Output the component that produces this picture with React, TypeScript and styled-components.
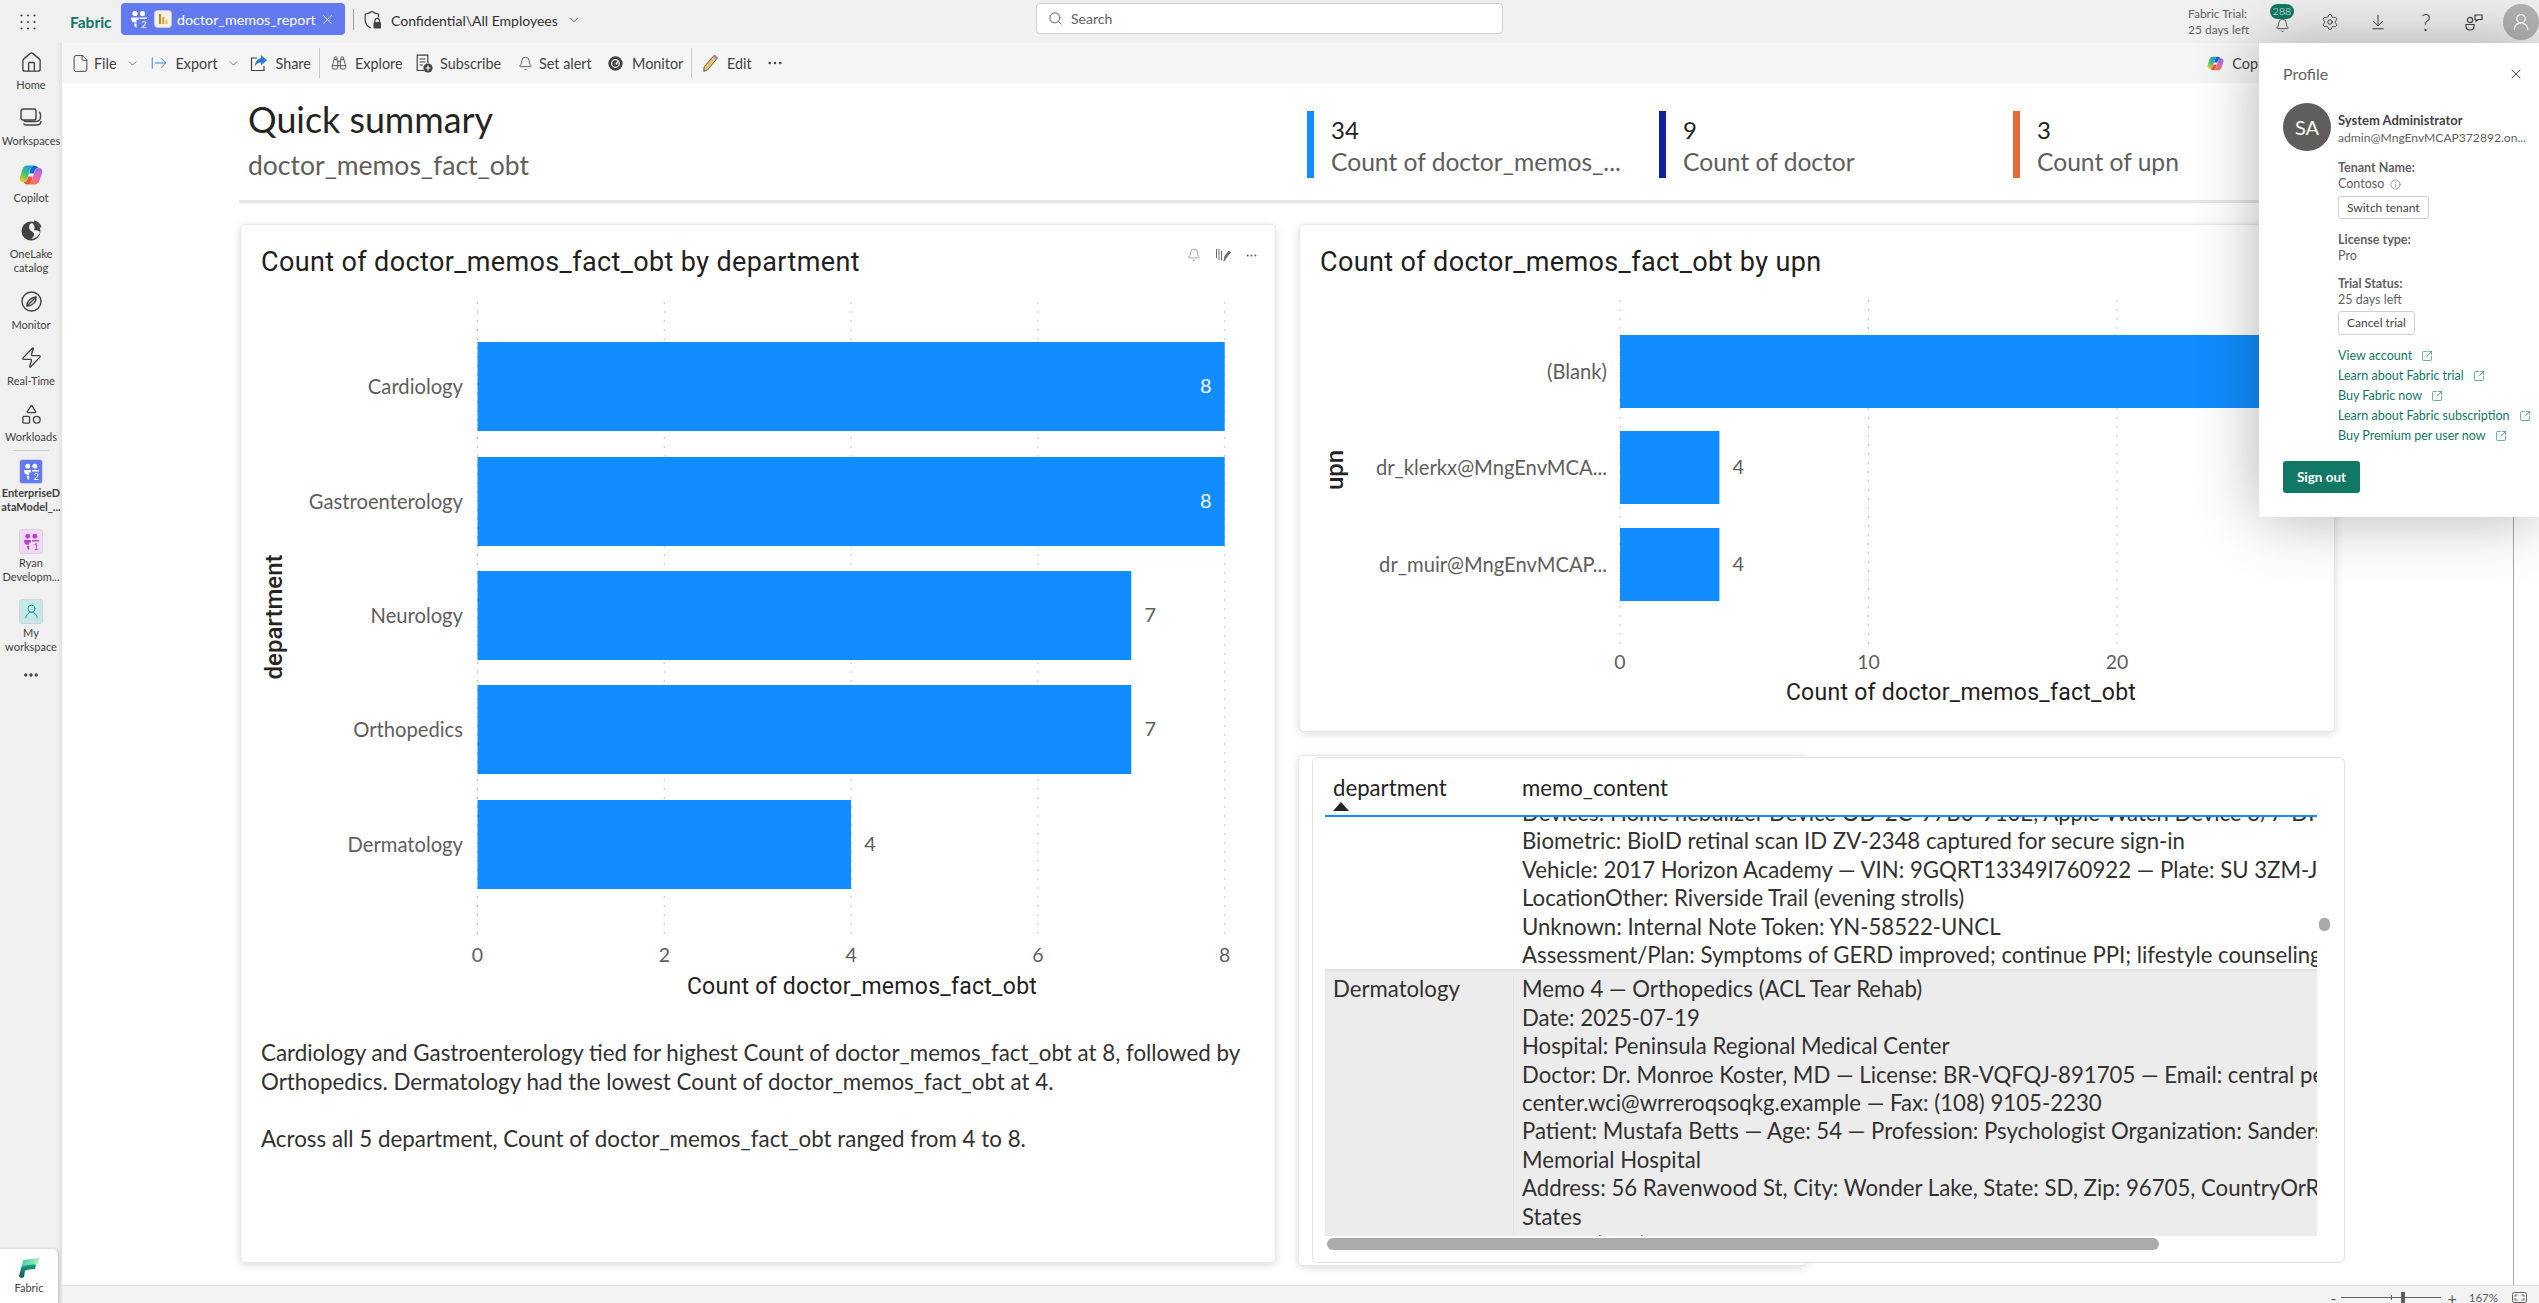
import React from 'react'
import styled, { createGlobalStyle } from 'styled-components'
import {
  ArrowDownToLine,
  ArrowRightFromLine,
  Bell,
  Binoculars,
  ChevronDown,
  Ellipsis,
  File,
  House,
  Info,
  Search,
  Settings,
  Shapes,
  SquareArrowOutUpRight,
  UserRound,
  X,
  Zap,
} from 'lucide-react'

const UI_FONT = '"Lato", "Open Sans", sans-serif'
const DIN_FONT = 'Roboto, "Liberation Sans", sans-serif'
const GREEN = '#117865'
const BLUE = '#118dff'

const GlobalStyle = createGlobalStyle`
  html, body { margin: 0; padding: 0; background: #fff; }
  body { font-family: ${UI_FONT}; color: #242424; }
  * { box-sizing: border-box; }
`

const Page = styled.div`
  position: relative;
  width: 2539px;
  height: 1303px;
  display: flex;
  flex-direction: column;
  overflow: hidden;
  background: #f0f0f0;
`

/* top bar */
const TopBar = styled.header`
  height: 43px;
  flex: none;
  display: flex;
  align-items: center;
  position: relative;
`
const Launcher = styled.div`
  width: 56px;
  display: flex;
  justify-content: center;
`
const Brand = styled.span`
  margin-left: 14px;
  width: 51px;
  font-size: 15.5px;
  font-weight: 700;
  color: ${GREEN};
`
const ReportTab = styled.div`
  width: 224px;
  height: 32px;
  margin-top: -5px;
  border-radius: 4px;
  background: #6279ef;
  color: #fff;
  display: flex;
  align-items: center;
  padding-left: 9px;
  font-size: 14.3px;
`
const TabIcons = styled.div`
  display: flex;
  gap: 6px;
`
const TabName = styled.span`
  margin-left: 5px;
  width: 143px;
  white-space: nowrap;
`
const TopDivider = styled.div`
  width: 1px;
  height: 21px;
  margin: -4px 10px 0 8px;
  background: #9a9a9a;
`
const SensitivityLabel = styled.div`
  display: flex;
  align-items: center;
  gap: 9px;
  font-size: 14px;
  color: #323130;
  margin-top: -3px;
`
const SearchBox = styled.div`
  position: absolute;
  left: 1036px;
  top: 3px;
  width: 467px;
  height: 31px;
  background: #fff;
  border: 1px solid #d1d1d1;
  border-radius: 4px;
  display: flex;
  align-items: center;
  gap: 8px;
  padding-left: 11px;
  font-size: 14px;
  color: #616161;
`
const TopRight = styled.div`
  margin-left: auto;
  display: flex;
  align-items: center;
  height: 100%;
`
const TrialInfo = styled.div`
  width: 70px;
  font-size: 12px;
  line-height: 15.5px;
  color: #616161;
`
const TopIcon = styled.div`
  position: relative;
  width: 48px;
  height: 24px;
  display: flex;
  justify-content: center;
  align-items: center;
  color: #424242;
  font-size: 23px;
  font-weight: 300;
`
const BellSlot = styled.div`
  margin-top: 7px;
  display: flex;
`
const Badge = styled.span`
  position: absolute;
  left: 12px;
  top: -6px;
  width: 24px;
  height: 15px;
  border-radius: 8px;
  background: ${GREEN};
  color: #fff;
  font-size: 10.5px;
  line-height: 15px;
  text-align: center;
`
const AccountCircle = styled.div`
  width: 36px;
  height: 36px;
  margin: 0 0 0 5px;
  border-radius: 50%;
  background: #b3b3b3;
  color: #fff;
  display: flex;
  align-items: center;
  justify-content: center;
`

/* body */
const Body = styled.div`
  flex: 1;
  min-height: 0;
  display: flex;
`
const SideNav = styled.nav`
  width: 62px;
  flex: none;
  padding-top: 7px;
  display: flex;
  flex-direction: column;
  align-items: center;
  position: relative;
  box-shadow: inset -6px 0 6px -6px rgba(0, 0, 0, 0.12);
`
const SideItem = styled.div<{ $gap?: number }>`
  width: 62px;
  display: flex;
  flex-direction: column;
  align-items: center;
  margin-bottom: ${(p) => (p.$gap === undefined ? 14.4 : p.$gap)}px;
`
const SideIcon = styled.div`
  height: 24px;
  display: flex;
  align-items: center;
  justify-content: center;
  color: #424242;
`
const SideLabel = styled.span<{ $bold?: boolean }>`
  margin-top: 4px;
  width: 60px;
  font-size: 11px;
  line-height: 14px;
  text-align: center;
  color: #424242;
  font-weight: ${(p) => (p.$bold ? 700 : 400)};
`
const SideDivider = styled.div`
  width: 36px;
  height: 1px;
  flex: none;
  background: #d1d1d1;
  margin: -8.4px 0 8px;
`
const WorkspaceTile = styled.div<{ $bg: string; $fg: string }>`
  width: 24px;
  height: 25px;
  margin-bottom: -2px;
  border-radius: 3px;
  border: 1px solid #d6d6d6;
  background: ${(p) => p.$bg};
  color: ${(p) => p.$fg};
  display: flex;
  align-items: center;
  justify-content: center;
`
const MoreDots = styled.div`
  margin-top: 12px;
  display: flex;
  color: #424242;
`
const FabricHome = styled.div`
  position: absolute;
  left: 0;
  bottom: 0;
  width: 58px;
  height: 54px;
  background: #fff;
  border-radius: 0 5px 0 0;
  box-shadow: 1px 0 3px rgba(0, 0, 0, 0.2);
  display: flex;
  flex-direction: column;
  align-items: center;
  padding-top: 9px;
  font-size: 11px;
  color: #424242;
  gap: 3px;
`
const Main = styled.main`
  flex: 1;
  min-width: 0;
  display: flex;
  flex-direction: column;
`

/* toolbar */
const Toolbar = styled.div`
  height: 40px;
  flex: none;
  background: #f5f5f5;
  display: flex;
  align-items: center;
  padding-left: 9px;
  font-size: 14.4px;
  color: #424242;
`
const ToolButton = styled.div<{ $w: number }>`
  width: ${(p) => p.$w}px;
  flex: none;
  display: flex;
  align-items: center;
  white-space: nowrap;
`
const ToolIcon = styled.div<{ $w: number }>`
  width: ${(p) => p.$w}px;
  flex: none;
  display: flex;
  align-items: center;
`
const ToolChevron = styled.div`
  margin-left: 9px;
  display: flex;
`
const ToolDivider = styled.div`
  width: 1px;
  height: 30px;
  flex: none;
  margin-right: 11px;
  background: #c8c8c8;
`
const Copilot = styled.div`
  margin-left: auto;
  margin-right: 261px;
  display: flex;
  align-items: center;
  gap: 8px;
`

/* report canvas */
const Canvas = styled.div`
  flex: 1;
  min-height: 0;
  background: #fff;
  padding-left: 177px;
  position: relative;
`
const CanvasEdge = styled.div`
  position: absolute;
  left: 2451px;
  top: 0;
  bottom: 0;
  width: 1px;
  background: #a8a8a8;
`
const Header = styled.div`
  width: 2106px;
  height: 120px;
  border-bottom: 3px solid #e6e6e6;
  display: flex;
  padding-left: 9px;
`
const TitleBlock = styled.div`
  width: 1059px;
  flex: none;
  padding-top: 14px;
`
const PageTitle = styled.h1`
  margin: 0;
  font-size: 35.8px;
  line-height: 46px;
  font-weight: 400;
  color: #252423;
`
const PageSubtitle = styled.div`
  font-size: 26.5px;
  line-height: 36px;
  margin-top: 4px;
  color: #605e5c;
`
const Kpi = styled.div<{ $color: string; $w: number }>`
  width: ${(p) => p.$w}px;
  flex: none;
  height: 67px;
  margin-top: 28px;
  border-left: 7px solid ${(p) => p.$color};
  padding-left: 17px;
`
const KpiValue = styled.div`
  font-size: 24px;
  line-height: 32px;
  margin-top: 3px;
  color: #252423;
`
const KpiLabel = styled.div`
  font-size: 24.6px;
  line-height: 32px;
  color: #605e5c;
  white-space: nowrap;
`
const Dash = styled.div`
  margin: 21px 0 0 1px;
  display: grid;
  grid-template-columns: 1036px 1036px;
  column-gap: 23px;
  align-items: start;
`
const Card = styled.section<{ $h: number }>`
  height: ${(p) => p.$h}px;
  position: relative;
  background: #fff;
  border: 1px solid #e9e9e9;
  border-radius: 5px;
  box-shadow: 0 2px 8px rgba(0, 0, 0, 0.14);
  padding-top: 21px;
  overflow: hidden;
`
const CardTitle = styled.h2`
  margin: 0 0 11px 20px;
  font-family: ${DIN_FONT};
  font-size: 27px;
  line-height: 33px;
  font-weight: 400;
  letter-spacing: 0.37px;
  color: #1f1e1d;
`
const VisualActions = styled.div`
  position: absolute;
  right: 17px;
  top: 23px;
  display: flex;
  align-items: center;
  gap: 14px;
  color: #6b6b6b;
`
const ChartSvg = styled.svg`
  display: block;
`
const Narrative = styled.div`
  margin: 29px 20px 0;
  font-size: 22.35px;
  line-height: 28.5px;
  color: #323130;
`
const NarrativePara = styled.p`
  margin: 0 0 28.5px;
`
const RightColumn = styled.div`
  display: flex;
  flex-direction: column;
  gap: 25px;
`
const TableStack = styled.div`
  position: relative;
  width: 1033px;
  height: 506px;
  margin-left: 13px;
  &::before {
    content: '';
    position: absolute;
    left: -14px;
    top: -2px;
    width: 507px;
    bottom: -3px;
    background: #fff;
    border: 1px solid #e9e9e9;
    border-radius: 5px;
    box-shadow: 0 2px 8px rgba(0, 0, 0, 0.14);
  }
`
const TableCard = styled.section`
  position: relative;
  height: 100%;
  background: #fff;
  border: 1px solid #e2e2e2;
  border-radius: 6px;
  padding: 17px 0 0 12px;
`
const TableHead = styled.div`
  width: 992px;
  height: 42px;
  display: flex;
  border-bottom: 2px solid ${BLUE};
  font-size: 22.2px;
  line-height: 28px;
  color: #252423;
`
const HeadCell = styled.div<{ $w?: number }>`
  width: ${(p) => (p.$w ? `${p.$w}px` : 'auto')};
  margin-top: -1px;
  padding-left: 8px;
`
const SortMark = styled.div`
  width: 0;
  height: 0;
  border-left: 8px solid transparent;
  border-right: 8px solid transparent;
  border-bottom: 9px solid #252423;
`
const TableViewport = styled.div`
  width: 992px;
  height: 419px;
  overflow: hidden;
`
const Row = styled.div<{ $shade?: boolean }>`
  display: flex;
  background: ${(p) => (p.$shade ? '#ececec' : 'transparent')};
  font-size: 22.2px;
  line-height: 28.4px;
  color: #323130;
  border-top: ${(p) => (p.$shade ? '2px solid #e0e0e0' : '0')};
  padding-top: ${(p) => (p.$shade ? 4 : 0)}px;
  margin-top: ${(p) => (p.$shade ? 0 : -18)}px;
`
const Cell = styled.div<{ $w?: number; $ruled?: boolean }>`
  width: ${(p) => (p.$w ? `${p.$w}px` : 'auto')};
  flex: ${(p) => (p.$w ? 'none' : 1)};
  min-width: 0;
  padding-left: 8px;
  overflow: hidden;
  ${(p) => (p.$ruled ? 'border-right: 1px solid #e3e3e3;' : '')}
`
const MemoLine = styled.div`
  white-space: nowrap;
`
const HScroll = styled.div`
  width: 832px;
  height: 12px;
  margin: 2px 0 0 2px;
  border-radius: 6px;
  background: #ababab;
`
const VScroll = styled.div`
  position: absolute;
  left: 1006px;
  top: 160px;
  width: 11px;
  height: 13px;
  border-radius: 5px;
  background: #a8a8a8;
`

/* status bar */
const StatusBar = styled.footer`
  height: 18px;
  flex: none;
  background: #f3f3f3;
  border-top: 1px solid #dedede;
  display: flex;
  align-items: center;
  justify-content: flex-end;
  padding: 6px 12px 0 0;
  font-size: 16px;
  color: #605e5c;
`
const ZoomTrack = styled.div`
  position: relative;
  width: 100px;
  height: 1px;
  margin: 0 6px 0 5px;
  background: #605e5c;
  &::before {
    content: '';
    position: absolute;
    left: 50px;
    top: -2px;
    width: 1px;
    height: 5px;
    background: #605e5c;
  }
  &::after {
    content: '';
    position: absolute;
    left: 60px;
    top: -5px;
    width: 4px;
    height: 11px;
    background: #605e5c;
  }
`
const ZoomValue = styled.span`
  margin: 0 14px 0 12px;
  font-size: 11.5px;
`

/* profile flyout */
const Flyout = styled.aside`
  position: absolute;
  left: 2259px;
  top: 43px;
  width: 280px;
  height: 474px;
  background: #fff;
  box-shadow: 0 0 60px rgba(0, 0, 0, 0.3);
  padding: 21px 0 0 24px;
  font-size: 12.5px;
  line-height: 16px;
  color: #616161;
`
const FlyoutHead = styled.div`
  display: flex;
  justify-content: space-between;
  align-items: center;
  height: 20px;
  padding-right: 15px;
  font-size: 16px;
  margin-bottom: 19px;
`
const ProfileRow = styled.div`
  display: flex;
  gap: 7px;
`
const Avatar = styled.div`
  width: 48px;
  height: 48px;
  flex: none;
  border-radius: 50%;
  background: #605e5c;
  color: #fff;
  font-size: 20px;
  display: flex;
  align-items: center;
  justify-content: center;
`
const Identity = styled.div`
  padding-top: 9px;
  font-size: 12.1px;
`
const UserName = styled.div`
  font-weight: 700;
  color: #424242;
  font-size: 13px;
  margin-bottom: 1.6px;
`
const Details = styled.div`
  padding-left: 55px;
  margin-top: 9px;
`
const FieldLabel = styled.div<{ $top?: number }>`
  font-weight: 700;
  color: #616161;
  margin-top: ${(p) => p.$top || 0}px;
`
const FieldValue = styled.div`
  display: flex;
  align-items: center;
  gap: 6px;
`
const OutlineButton = styled.div`
  display: inline-block;
  height: 23.4px;
  margin-top: 3.5px;
  padding: 0 8px;
  border: 1px solid #d1d1d1;
  border-radius: 3px;
  font-size: 12px;
  line-height: 21px;
  color: #424242;
`
const Links = styled.div`
  margin-top: 11px;
`
const LinkRow = styled.div`
  display: flex;
  align-items: center;
  gap: 9px;
  height: 20px;
  color: ${GREEN};
`
const SignOut = styled.div`
  width: 77px;
  height: 32px;
  margin-top: 15.4px;
  border-radius: 3px;
  background: ${GREEN};
  color: #fff;
  font-size: 13.5px;
  font-weight: 700;
  line-height: 32px;
  text-align: center;
`

/* drawings */
const LauncherIcon = () => (
  <svg width="16" height="16" viewBox="0 0 16 16" fill="#424242">
    {[1.5, 8, 14.5].flatMap((y) => [1.5, 8, 14.5].map((x) => <circle key={`${x}-${y}`} cx={x} cy={y} r="1.1" />))}
  </svg>
)

const TeamIcon = ({ size = 18, count = '2' }: { size?: number; count?: string }) => (
  <svg width={size} height={size} viewBox="0 0 18 18" fill="currentColor">
    <circle cx="5" cy="3.5" r="2.6" />
    <circle cx="12.5" cy="3.5" r="2.6" />
    <path d="M1 7.5h7.5v2.5H6.5v2.5H4.5C2.5 12.5 1 10.5 1 7.5z" />
    <path d="M9.5 7.5H17V9H9.5z" />
    <path d="M4 13.5h2.5V18C5 17.5 4 15.5 4 13.5z" />
    <text x="11" y="17.5" fontSize="9.5" fontFamily="Lato, sans-serif">
      {count}
    </text>
  </svg>
)

const ReportIcon = () => (
  <svg width="18" height="18" viewBox="0 0 18 18">
    <rect x="0.5" y="0.5" width="17" height="17" rx="3" fill="#f4f1e8" stroke="#c9c9c9" />
    <rect x="5" y="4" width="2" height="10" fill="#c38a12" />
    <rect x="8.2" y="7" width="2" height="7" fill="#dca326" />
    <rect x="11.4" y="10" width="2" height="4" fill="#eec14f" />
  </svg>
)

const ShieldLockIcon = () => (
  <svg width="18" height="20" viewBox="0 0 18 20" fill="none" stroke="#424242" strokeWidth="1.2">
    <path d="M8 1.2C6 3 3.5 3.8 1.2 4v6c0 3.6 2.4 6.6 5.6 8M8 1.2c2 1.8 4.5 2.6 6.5 2.8v3.5" />
    <rect x="9.5" y="12" width="7.5" height="6.5" rx="1" fill="#424242" stroke="none" />
    <path d="M11 12v-1.5a2.2 2.2 0 0 1 4.4 0V12" />
  </svg>
)

const ShareIcon = () => (
  <svg width="18" height="18" viewBox="0 0 18 18" fill="none">
    <path d="M7 4H1.5v12.5H14V12" stroke="#424242" strokeWidth="1.2" />
    <path d="M11 1l6 5.2-6 5V8.4C8 8.4 6 10 4.8 12.6 5 8 7.5 4.6 11 4.2z" fill="#2b7cd3" />
  </svg>
)

const SubscribeIcon = () => (
  <svg width="17" height="19" viewBox="0 0 17 19" fill="none" stroke="#424242" strokeWidth="1.2">
    <path d="M8 16.5H1.2V1.2h10.6v8" />
    <path d="M3.5 5h6M3.5 8h6M3.5 11h3.5" />
    <circle cx="12" cy="14" r="4.6" fill="#424242" stroke="none" />
    <path d="M12 11.6v4.8M9.6 14h4.8" stroke="#fff" />
  </svg>
)

const GaugeIcon = () => (
  <svg width="15" height="15" viewBox="0 0 15 15">
    <circle cx="7.5" cy="7.5" r="7.2" fill="#424242" />
    <circle cx="7.5" cy="7.5" r="3.8" fill="none" stroke="#fff" strokeWidth="1.2" />
    <path d="M7 8l3.8-4.2-1.6 5z" fill="#fff" />
  </svg>
)

const PencilIcon = () => (
  <svg width="16" height="18" viewBox="0 0 16 18">
    <path d="M1 13L11 1.5l3.2 2.8L4.4 16 .8 17.4z" fill="#e8c46a" stroke="#5a5a5a" strokeWidth="1" />
    <path d="M11 1.5l3.2 2.8" stroke="#a779c9" strokeWidth="2.4" />
  </svg>
)

const CopilotIcon = ({ size = 18 }: { size?: number }) => (
  <svg width={size} height={size} viewBox="0 0 24 24">
    <defs>
      <linearGradient id="cpLeft" x1="0.7" y1="0" x2="0.2" y2="1">
        <stop offset="0" stopColor="#1f9fe0" />
        <stop offset="0.5" stopColor="#35c27a" />
        <stop offset="1" stopColor="#f5c92e" />
      </linearGradient>
      <linearGradient id="cpRight" x1="0.8" y1="0" x2="0.3" y2="1">
        <stop offset="0" stopColor="#9a6cf0" />
        <stop offset="0.55" stopColor="#e668b8" />
        <stop offset="1" stopColor="#f77a3a" />
      </linearGradient>
    </defs>
    <path d="M8.5 2.5H14.5C12 3.5 11.300 5.500 10.700 7.500L8.700 14.800C8 17.500 6.500 19 4 19 1.500 19 .2 17 1 14L3.400 6.500C4.200 4 6 2.500 8.500 2.500Z" fill="url(#cpLeft)" />
    <path d="M15.500 21.500H9.500C12 20.500 12.700 18.500 13.300 16.500L15.300 9.200C16 6.500 17.500 5 20 5 22.500 5 23.800 7 23 10L20.600 17.500C19.800 20 18 21.500 15.500 21.500Z" fill="url(#cpRight)" />
    <path d="M14.500 2.500c2.300 0 4 1 5 2.600-2.200 0-3.500 1.200-4.200 3.500l-.6 2H10.300l.7-3c.6-2.400 1.300-4.100 3.500-5.100z" fill="#1766cf" />
    <path d="M9.500 21.500c-2.300 0-4-1-5-2.600 2.200 0 3.500-1.200 4.200-3.500l.6-2h4.400l-.7 3c-.6 2.400-1.300 4.100-3.500 5.100z" fill="#f0563e" />
  </svg>
)

const FabricLogo = () => (
  <svg width="20" height="20" viewBox="0 0 20 20">
    <defs>
      <linearGradient id="fbA" x1="0" y1="0" x2="1" y2="0.3">
        <stop offset="0" stopColor="#2fc6a4" />
        <stop offset="1" stopColor="#a5f2b4" />
      </linearGradient>
      <linearGradient id="fbB" x1="0" y1="0" x2="0" y2="1">
        <stop offset="0" stopColor="#1f9d84" />
        <stop offset="1" stopColor="#0e5f57" />
      </linearGradient>
    </defs>
    <path d="M4 2.500C5 1.500 14 1 20 0l-1.500 6.500C14 7 8 7.500 2.500 9z" fill="url(#fbA)" />
    <path d="M2.500 8.500C8 7 12 6.500 17 6.500l-1 4.500c-4 .2-7 .6-10 1.500L5 19c-2 1.500-4.500 1-5-1z" fill="url(#fbB)" />
  </svg>
)

const StackIcon = () => (
  <svg width="22" height="20" viewBox="0 0 22 20" fill="none" stroke="#424242" strokeWidth="1.4">
    <rect x="1" y="1" width="15" height="11" rx="2" />
    <path d="M19 4c1 .5 1.500 1.200 1.500 2.500V9c0 3-1.500 4.500-4.500 4.500H6c-1 0-2-.5-2.500-1.500" />
    <path d="M3.500 15.500c.6 1 1.500 1.500 2.500 1.500h10c3 0 5-1.500 5-4" />
  </svg>
)

const LakeIcon = () => (
  <svg width="22" height="22" viewBox="0 0 22 22">
    <circle cx="11" cy="11" r="9.500" fill="#424242" />
    <path d="M12 3c3 2 3 5 2 7.500 2-.5 4.500 0 6 1.500-1 4-5 7-9 7 4-3 4-6 1-7.500-2-1-4-3-2-7.500z" fill="#f0f0f0" />
    <path d="M14 1.500c3 .5 6 3 6.500 6" fill="none" stroke="#424242" strokeWidth="2" />
  </svg>
)

const MonitorNavIcon = () => (
  <svg width="21" height="21" viewBox="0 0 21 21" fill="none" stroke="#424242" strokeWidth="1.4">
    <circle cx="10.500" cy="10.500" r="9.500" />
    <path d="M6 15c-.4-4.500 3.500-8.500 9-9 .4 5-3.500 9-9 9z" />
    <path d="M6 15l9-9" />
  </svg>
)

const FeedbackIcon = () => (
  <svg width="18" height="18" viewBox="0 0 18 18" fill="none" stroke="#424242" strokeWidth="1.2">
    <circle cx="5" cy="7" r="2.6" />
    <path d="M1 11.500h8v2c0 2-1.500 3.500-4 3.500s-4-1.500-4-3.500z" />
    <path d="M10 2h7v4.500h-4l-2 1.700V6.500h-1z" />
  </svg>
)

const ChartPinIcon = () => (
  <svg width="16" height="14" viewBox="0 0 16 14" fill="none" stroke="#6b6b6b" strokeWidth="1">
    <path d="M1.500 1v9M4 1v11M6.500 3v9" />
    <path d="M9 13l1-5 4-5 1.500 1.200-4 5z" fill="#6b6b6b" />
  </svg>
)

const FitIcon = () => (
  <svg width="15" height="11" viewBox="0 0 15 11" fill="none" stroke="#605e5c">
    <rect x="0.5" y="0.5" width="14" height="10" rx="2" />
    <path d="M3 5V3h2.500M12 5V3H9.500M3 6v2h2.500M12 6v2H9.500" strokeWidth="0.9" />
  </svg>
)

interface BarDatum {
  label: string
  value: number
  y: number
  inside?: boolean
}

interface BarChartProps {
  width: number
  height: number
  x0: number
  unit: number
  barHeight: number
  ticks: number[]
  gridTop: number
  gridBottom: number
  tickY: number
  labelRight: number
  bars: BarDatum[]
  xTitle: string
  xTitleX: number
  xTitleY: number
  yTitle: string
  yTitleX: number
  yTitleY: number
}

const BarChart: React.FC<BarChartProps> = ({
  width,
  height,
  x0,
  unit,
  barHeight,
  ticks,
  gridTop,
  gridBottom,
  tickY,
  labelRight,
  bars,
  xTitle,
  xTitleX,
  xTitleY,
  yTitle,
  yTitleX,
  yTitleY,
}) => (
  <ChartSvg width={width} height={height} viewBox={`0 0 ${width} ${height}`}>
    {ticks.map((t) => (
      <line
        key={t}
        x1={x0 + t * unit}
        x2={x0 + t * unit}
        y1={gridTop}
        y2={gridBottom}
        stroke="#c8c6c4"
        strokeDasharray="2 7"
      />
    ))}
    {bars.map((b) => {
      const right = x0 + b.value * unit
      return (
        <g key={b.label}>
          <rect x={x0} y={b.y} width={b.value * unit} height={barHeight} fill={BLUE} />
          <text
            x={labelRight}
            y={b.y + barHeight / 2 + 7}
            textAnchor="end"
            fontFamily={UI_FONT}
            fontSize="20.2"
            fill="#605e5c"
          >
            {b.label}
          </text>
          <text
            x={b.inside ? right - 19 : right + 19}
            y={b.y + barHeight / 2 + 6}
            textAnchor="middle"
            fontFamily={UI_FONT}
            fontSize="20"
            fill={b.inside ? '#fff' : '#605e5c'}
          >
            {b.value}
          </text>
        </g>
      )
    })}
    {ticks.map((t) => (
      <text
        key={t}
        x={x0 + t * unit}
        y={tickY}
        textAnchor="middle"
        fontFamily={UI_FONT}
        fontSize="19.5"
        fill="#605e5c"
      >
        {t}
      </text>
    ))}
    <text
      x={xTitleX}
      y={xTitleY}
      textAnchor="middle"
      fontFamily={DIN_FONT}
      fontSize="23"
      letterSpacing="0.27"
      fill="#1f1e1d"
    >
      {xTitle}
    </text>
    <text
      transform={`translate(${yTitleX} ${yTitleY}) rotate(-90)`}
      textAnchor="middle"
      fontFamily={DIN_FONT}
      fontSize="24"
      fontWeight="500"
      fill="#252423"
    >
      {yTitle}
    </text>
  </ChartSvg>
)

const DEPARTMENT_BARS: BarDatum[] = [
  { label: 'Cardiology', value: 8, y: 52, inside: true },
  { label: 'Gastroenterology', value: 8, y: 167, inside: true },
  { label: 'Neurology', value: 7, y: 281 },
  { label: 'Orthopedics', value: 7, y: 395 },
  { label: 'Dermatology', value: 4, y: 510 },
]

const UPN_BARS: BarDatum[] = [
  { label: '(Blank)', value: 26, y: 45 },
  { label: 'dr_klerkx@MngEnvMCA...', value: 4, y: 141 },
  { label: 'dr_muir@MngEnvMCAP...', value: 4, y: 238 },
]

const TOP_ROW_LINES = [
  'Devices: Home nebulizer Device OD-2C-97B0-910E, Apple Watch Device 3/7-DH7',
  'Biometric: BioID retinal scan ID ZV-2348 captured for secure sign-in',
  'Vehicle: 2017 Horizon Academy — VIN: 9GQRT13349I760922 — Plate: SU 3ZM-J3',
  'LocationOther: Riverside Trail (evening strolls)',
  'Unknown: Internal Note Token: YN-58522-UNCL',
  'Assessment/Plan: Symptoms of GERD improved; continue PPI; lifestyle counseling',
]

const MEMO_LINES = [
  'Memo 4 — Orthopedics (ACL Tear Rehab)',
  'Date: 2025-07-19',
  'Hospital: Peninsula Regional Medical Center',
  'Doctor: Dr. Monroe Koster, MD — License: BR-VQFQJ-891705 — Email: central peninsula',
  'center.wci@wrreroqsoqkg.example — Fax: (108) 9105-2230',
  'Patient: Mustafa Betts — Age: 54 — Profession: Psychologist Organization: Sanders',
  'Memorial Hospital',
  'Address: 56 Ravenwood St, City: Wonder Lake, State: SD, Zip: 96705, CountryOrRegion: United',
  'States',
  'Phone: (108) 9069-4144 — Email: mustafa.betts@example.org — Mr',
]

const LINKS = [
  'View account',
  'Learn about Fabric trial',
  'Buy Fabric now',
  'Learn about Fabric subscription',
  'Buy Premium per user now',
]

const NAV_TOP = [
  { label: 'Home', icon: <House size={23} strokeWidth={1.4} /> },
  { label: 'Workspaces', icon: <StackIcon /> },
  { label: 'Copilot', icon: <CopilotIcon size={24} /> },
  { label: 'OneLake catalog', icon: <LakeIcon /> },
  { label: 'Monitor', icon: <MonitorNavIcon /> },
  { label: 'Real-Time', icon: <Zap size={23} strokeWidth={1.4} /> },
  { label: 'Workloads', icon: <Shapes size={23} strokeWidth={1.4} /> },
]

const App: React.FC = () => (
  <Page>
    <GlobalStyle />
    <TopBar>
      <Launcher>
        <LauncherIcon />
      </Launcher>
      <Brand>Fabric</Brand>
      <ReportTab>
        <TabIcons>
          <TeamIcon />
          <ReportIcon />
        </TabIcons>
        <TabName>doctor_memos_report</TabName>
        <X size={15} strokeWidth={1.3} />
      </ReportTab>
      <TopDivider />
      <SensitivityLabel>
        <ShieldLockIcon />
        Confidential\All Employees
        <ChevronDown size={14} strokeWidth={1.4} />
      </SensitivityLabel>
      <SearchBox>
        <Search size={15} strokeWidth={1.5} />
        Search
      </SearchBox>
      <TopRight>
        <TrialInfo>
          Fabric Trial:
          <br />
          25 days left
        </TrialInfo>
        <TopIcon>
          <BellSlot>
            <Bell size={15} strokeWidth={1.3} />
          </BellSlot>
          <Badge>288</Badge>
        </TopIcon>
        <TopIcon>
          <Settings size={18} strokeWidth={1.3} />
        </TopIcon>
        <TopIcon>
          <ArrowDownToLine size={18} strokeWidth={1.3} />
        </TopIcon>
        <TopIcon>?</TopIcon>
        <TopIcon>
          <FeedbackIcon />
        </TopIcon>
        <AccountCircle>
          <UserRound size={20} strokeWidth={1.5} />
        </AccountCircle>
      </TopRight>
    </TopBar>
    <Body>
      <SideNav>
        {NAV_TOP.map((item) => (
          <SideItem key={item.label}>
            <SideIcon>{item.icon}</SideIcon>
            <SideLabel>{item.label}</SideLabel>
          </SideItem>
        ))}
        <SideDivider />
        <SideItem $gap={15}>
          <WorkspaceTile $bg="#6279ef" $fg="#fff">
            <TeamIcon size={17} />
          </WorkspaceTile>
          <SideLabel $bold>EnterpriseD ataModel_...</SideLabel>
        </SideItem>
        <SideItem $gap={15}>
          <WorkspaceTile $bg="#f2d8f5" $fg="#b146c2">
            <TeamIcon size={17} count="1" />
          </WorkspaceTile>
          <SideLabel>Ryan Developm...</SideLabel>
        </SideItem>
        <SideItem $gap={0}>
          <WorkspaceTile $bg="#c4e9e8" $fg="#1f9c9c">
            <UserRound size={17} strokeWidth={1.4} />
          </WorkspaceTile>
          <SideLabel>My workspace</SideLabel>
        </SideItem>
        <MoreDots>
          <Ellipsis size={18} strokeWidth={2.4} />
        </MoreDots>
        <FabricHome>
          <FabricLogo />
          Fabric
        </FabricHome>
      </SideNav>
      <Main>
        <Toolbar>
          <ToolButton $w={79}>
            <ToolIcon $w={23}>
              <File size={19} strokeWidth={1.2} />
            </ToolIcon>
            File
            <ToolChevron>
              <ChevronDown size={13} strokeWidth={1.3} />
            </ToolChevron>
          </ToolButton>
          <ToolButton $w={100}>
            <ToolIcon $w={25.5}>
              <ArrowRightFromLine size={18} strokeWidth={1.2} color="#2b7cd3" />
            </ToolIcon>
            Export
            <ToolChevron>
              <ChevronDown size={13} strokeWidth={1.3} />
            </ToolChevron>
          </ToolButton>
          <ToolButton $w={69}>
            <ToolIcon $w={25.5}>
              <ShareIcon />
            </ToolIcon>
            Share
          </ToolButton>
          <ToolDivider />
          <ToolButton $w={85}>
            <ToolIcon $w={24}>
              <Binoculars size={16} strokeWidth={1.3} />
            </ToolIcon>
            Explore
          </ToolButton>
          <ToolButton $w={102}>
            <ToolIcon $w={24}>
              <SubscribeIcon />
            </ToolIcon>
            Subscribe
          </ToolButton>
          <ToolButton $w={90}>
            <ToolIcon $w={21}>
              <Bell size={15} strokeWidth={1.3} />
            </ToolIcon>
            Set alert
          </ToolButton>
          <ToolButton $w={83}>
            <ToolIcon $w={24}>
              <GaugeIcon />
            </ToolIcon>
            Monitor
          </ToolButton>
          <ToolDivider />
          <ToolButton $w={63}>
            <ToolIcon $w={24}>
              <PencilIcon />
            </ToolIcon>
            Edit
          </ToolButton>
          <Ellipsis size={18} strokeWidth={1.5} />
          <Copilot>
            <CopilotIcon size={17} />
            Copilot
          </Copilot>
        </Toolbar>
        <Canvas>
          <CanvasEdge />
          <Header>
            <TitleBlock>
              <PageTitle>Quick summary</PageTitle>
              <PageSubtitle>doctor_memos_fact_obt</PageSubtitle>
            </TitleBlock>
            <Kpi $color={BLUE} $w={352}>
              <KpiValue>34</KpiValue>
              <KpiLabel>Count of doctor_memos_...</KpiLabel>
            </Kpi>
            <Kpi $color="#12239e" $w={354}>
              <KpiValue>9</KpiValue>
              <KpiLabel>Count of doctor</KpiLabel>
            </Kpi>
            <Kpi $color="#e66c37" $w={300}>
              <KpiValue>3</KpiValue>
              <KpiLabel>Count of upn</KpiLabel>
            </Kpi>
          </Header>
          <Dash>
            <Card $h={1039}>
              <CardTitle>Count of doctor_memos_fact_obt by department</CardTitle>
              <VisualActions>
                <Bell size={14} strokeWidth={1} />
                <ChartPinIcon />
                <Ellipsis size={13} strokeWidth={2} />
              </VisualActions>
              <BarChart
                width={1034}
                height={720}
                x0={236.5}
                unit={93.4}
                barHeight={89}
                ticks={[0, 2, 4, 6, 8]}
                gridTop={12}
                gridBottom={646}
                tickY={672}
                labelRight={222}
                bars={DEPARTMENT_BARS}
                xTitle="Count of doctor_memos_fact_obt"
                xTitleX={621}
                xTitleY={704}
                yTitle="department"
                yTitleX={41}
                yTitleY={327}
              />
              <Narrative>
                <NarrativePara>
                  Cardiology and Gastroenterology tied for highest Count of doctor_memos_fact_obt at 8, followed by
                  Orthopedics. Dermatology had the lowest Count of doctor_memos_fact_obt at 4.
                </NarrativePara>
                <NarrativePara>Across all 5 department, Count of doctor_memos_fact_obt ranged from 4 to 8.</NarrativePara>
              </Narrative>
            </Card>
            <RightColumn>
              <Card $h={508}>
                <CardTitle>Count of doctor_memos_fact_obt by upn</CardTitle>
                <BarChart
                  width={1034}
                  height={441}
                  x0={320}
                  unit={24.85}
                  barHeight={73}
                  ticks={[0, 10, 20]}
                  gridTop={10}
                  gridBottom={355}
                  tickY={379}
                  labelRight={307}
                  bars={UPN_BARS}
                  xTitle="Count of doctor_memos_fact_obt"
                  xTitleX={661}
                  xTitleY={410}
                  yTitle="upn"
                  yTitleX={43}
                  yTitleY={180}
                />
              </Card>
              <TableStack>
                <TableCard>
                  <TableHead>
                    <HeadCell $w={189}>
                      department
                      <SortMark />
                    </HeadCell>
                    <HeadCell>memo_content</HeadCell>
                  </TableHead>
                  <TableViewport>
                    <Row>
                      <Cell $w={189} />
                      <Cell>
                        {TOP_ROW_LINES.map((line) => (
                          <MemoLine key={line}>{line}</MemoLine>
                        ))}
                      </Cell>
                    </Row>
                    <Row $shade>
                      <Cell $w={189} $ruled>
                        Dermatology
                      </Cell>
                      <Cell>
                        {MEMO_LINES.map((line) => (
                          <MemoLine key={line}>{line}</MemoLine>
                        ))}
                      </Cell>
                    </Row>
                  </TableViewport>
                  <HScroll />
                  <VScroll />
                </TableCard>
              </TableStack>
            </RightColumn>
          </Dash>
        </Canvas>
        <StatusBar>
          -
          <ZoomTrack />
          +
          <ZoomValue>167%</ZoomValue>
          <FitIcon />
        </StatusBar>
      </Main>
    </Body>
    <Flyout>
      <FlyoutHead>
        Profile
        <X size={16} strokeWidth={1.2} color="#242424" />
      </FlyoutHead>
      <ProfileRow>
        <Avatar>SA</Avatar>
        <Identity>
          <UserName>System Administrator</UserName>
          admin@MngEnvMCAP372892.on...
        </Identity>
      </ProfileRow>
      <Details>
        <FieldLabel>Tenant Name:</FieldLabel>
        <FieldValue>
          Contoso <Info size={11} strokeWidth={1.3} />
        </FieldValue>
        <OutlineButton>Switch tenant</OutlineButton>
        <FieldLabel $top={13}>License type:</FieldLabel>
        <FieldValue>Pro</FieldValue>
        <FieldLabel $top={12}>Trial Status:</FieldLabel>
        <FieldValue>25 days left</FieldValue>
        <OutlineButton>Cancel trial</OutlineButton>
        <Links>
          {LINKS.map((link) => (
            <LinkRow key={link}>
              {link}
              <SquareArrowOutUpRight size={12} strokeWidth={1.2} />
            </LinkRow>
          ))}
        </Links>
      </Details>
      <SignOut>Sign out</SignOut>
    </Flyout>
  </Page>
)

export default App
